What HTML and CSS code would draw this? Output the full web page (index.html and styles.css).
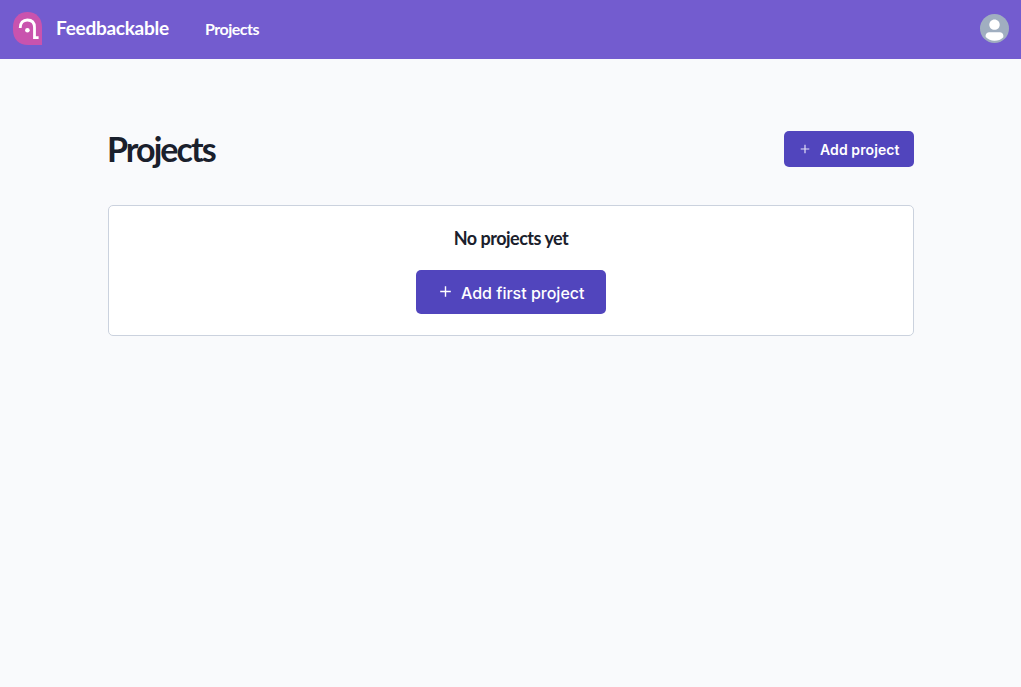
FILE: index.html
```html
<!DOCTYPE html>
<html lang="en">
<head>
<meta charset="utf-8">
<title>Feedbackable</title>
<link rel="stylesheet" href="styles.css">
</head>
<body>
<header class="navbar">
  <a class="brand">
    <svg class="logo" width="29" height="33" viewBox="0 0 29 33" fill="none">
      <path d="M0 15C0 6 6 0 14.5 0S29 6 29 15V33H15C6 33 0 27 0 18Z" fill="#c953ae"/>
      <path d="M7.2 16C7.2 10.8 10 8 14.3 8C19 8 21.5 11 21.5 15.5V25.6H25.6" stroke="#fff" stroke-width="2.8"/>
      <circle cx="14.4" cy="18.3" r="2.3" fill="#fff"/>
    </svg>
    <span class="brand-name">Feedbackable</span>
  </a>
  <nav class="nav"><a class="nav-link">Projects</a></nav>
  <svg class="avatar" width="29" height="29" viewBox="0 0 128 128">
    <circle cx="64" cy="64" r="64" fill="#a0aec0"/>
    <path fill="#fff" d="M103 102.1388C93.094 111.92 79.3504 118 64.1638 118 48.8056 118 34.9294 111.768 25 101.7892V95.2C25 86.8096 31.981 80 40.6 80h46.8C96.019 80 103 86.8096 103 95.2v6.9388Z"/>
    <path fill="#fff" d="M63.9961 24C51.2936 24 41 34.2938 41 46.9961s10.2936 23 22.9961 23c12.7014 0 22.9963-10.2977 22.9963-23S76.6975 24 63.9961 24"/>
  </svg>
</header>
<main class="content">
  <div class="page-head">
    <h1 class="title">Projects</h1>
    <button class="btn btn-md">
      <svg class="plus" width="10" height="10" viewBox="0 0 10 10"><path d="M5 .7V9.3M.7 5H9.3" stroke="#e3e0f5" stroke-width="1.2"/></svg>
      <span>Add project</span>
    </button>
  </div>
  <section class="empty">
    <h2 class="empty-title">No projects yet</h2>
    <button class="btn btn-lg">
      <svg class="plus" width="11" height="11" viewBox="0 0 11 11"><path d="M5.5 .2V10.8M.2 5.5H10.8" stroke="#fff" stroke-width="1.4"/></svg>
      <span>Add first project</span>
    </button>
  </section>
</main>
</body>
</html>
```
FILE: styles.css
```css
* { box-sizing: border-box; }
body {
  margin: 0;
  min-height: 100vh;
  background: #f9fafc;
  color: #1a202c;
  font-family: Inter, sans-serif;
}
.navbar {
  display: flex;
  align-items: center;
  height: 59px;
  padding: 0 12px 2px 13px;
  background: #735ccf;
  color: #fff;
}
.brand { display: flex; align-items: center; gap: 14px; }
.logo { display: block; }
.brand-name, .nav-link, .title, .empty-title { font-family: Lato, sans-serif; }
.brand-name { width: 114px; padding-bottom: 2px; font-size: 19px; font-weight: 700; letter-spacing: -0.27px; line-height: 24px; white-space: nowrap; }
.nav { margin-left: 35px; }
.nav-link { font-size: 16px; font-weight: 700; letter-spacing: -0.5px; }
.avatar { margin-left: auto; }
.content { width: 806px; margin: 72px auto 0 108px; }
.page-head { display: flex; justify-content: space-between; height: 36px; }
.title { margin: 0 0 0 -1px; font-size: 34px; line-height: 36px; font-weight: 700; letter-spacing: -1.95px; }
.btn {
  display: flex;
  align-items: center;
  border: 0;
  padding: 0;
  border-radius: 5px;
  background: #5145bd;
  color: #fff;
  font-family: Inter, sans-serif;
  font-weight: 600;
  white-space: nowrap;
}
.btn-md { width: 130px; height: 36px; padding-left: 16px; gap: 10px; font-size: 14px; letter-spacing: 0.1px; }
.btn-lg { width: 190px; height: 44px; padding-left: 24px; gap: 10px; font-size: 16px; font-weight: 500; }
.btn-lg span { padding-top: 2px; }
.plus { margin-bottom: 1px; }
.empty {
  display: flex;
  flex-direction: column;
  align-items: center;
  height: 131px;
  margin-top: 38px;
  padding-top: 20px;
  border: 1px solid #cbd2de;
  border-radius: 5px;
  background: #fff;
}
.empty-title { margin: 0 0 20px; font-size: 18px; line-height: 24px; font-weight: 700; letter-spacing: -0.5px; }
```
